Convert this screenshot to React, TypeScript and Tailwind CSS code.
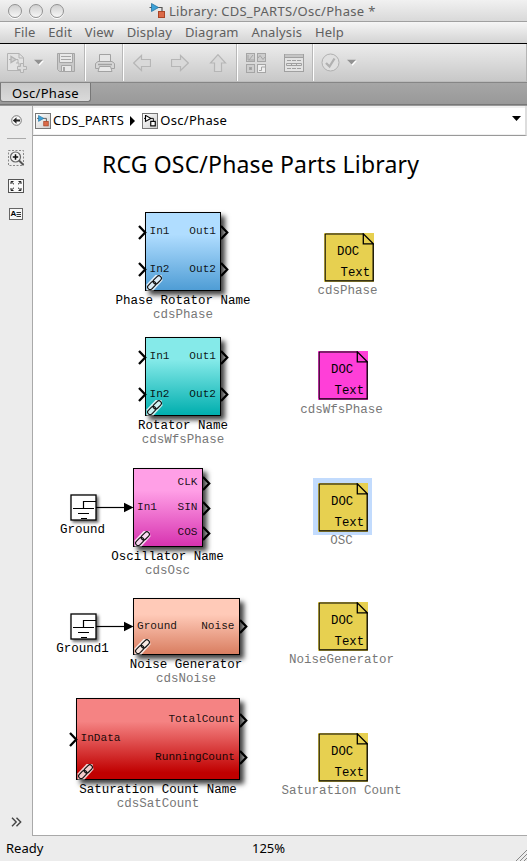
import type { ReactNode } from "react";

const UI = "font-['Noto_Sans','Open_Sans',sans-serif]";

type Port = { label: string; y: number };
type BlockData = {
  name: string;
  kind: string;
  x: number;
  y: number;
  w: number;
  h: number;
  fill: string;
  inputs: Port[];
  outputs: Port[];
  wired?: boolean;
};

// Coordinates are relative to the top left corner of the canvas.
const blocks: BlockData[] = [
  {
    name: "Phase Rotator Name", kind: "cdsPhase", x: 112, y: 76, w: 76, h: 79,
    fill: "bg-[linear-gradient(#b0ddff_0%,#b0ddff_28%,#4f9dd5_100%)]",
    inputs: [{ label: "In1", y: 20 }, { label: "In2", y: 57.5 }],
    outputs: [{ label: "Out1", y: 20 }, { label: "Out2", y: 57.5 }],
  },
  {
    name: "Rotator Name", kind: "cdsWfsPhase", x: 112, y: 201, w: 76, h: 79,
    fill: "bg-[linear-gradient(#85eae9_0%,#85eae9_28%,#00aeae_100%)]",
    inputs: [{ label: "In1", y: 20 }, { label: "In2", y: 57.5 }],
    outputs: [{ label: "Out1", y: 20 }, { label: "Out2", y: 57.5 }],
  },
  {
    name: "Oscillator Name", kind: "cdsOsc", x: 99.5, y: 332, w: 70, h: 79,
    fill: "bg-[linear-gradient(#ff9fe6_0%,#ff9fe6_28%,#d733b0_100%)]",
    inputs: [{ label: "In1", y: 40 }],
    outputs: [{ label: "CLK", y: 15 }, { label: "SIN", y: 40 }, { label: "COS", y: 65 }],
    wired: true,
  },
  {
    name: "Noise Generator", kind: "cdsNoise", x: 99.5, y: 462, w: 107, h: 57,
    fill: "bg-[linear-gradient(#ffcab8_0%,#ffcab8_28%,#d97e61_100%)]",
    inputs: [{ label: "Ground", y: 28.5 }],
    outputs: [{ label: "Noise", y: 28.5 }],
    wired: true,
  },
  {
    name: "Saturation Count Name", kind: "cdsSatCount", x: 43, y: 562, w: 164, h: 82,
    fill: "bg-[linear-gradient(#f58383_0%,#f58383_28%,#c00000_92%,#c00000_100%)]",
    inputs: [{ label: "InData", y: 41 }],
    outputs: [{ label: "TotalCount", y: 22 }, { label: "RunningCount", y: 59.5 }],
  },
];

const docs = [
  { name: "cdsPhase", x: 290.5, y: 96.5, fill: "bg-[#e7d050]" },
  { name: "cdsWfsPhase", x: 284.5, y: 215, fill: "bg-[#ff3fd8]" },
  { name: "OSC", x: 284.5, y: 346.5, fill: "bg-[#e7d050]", selected: true },
  { name: "NoiseGenerator", x: 284.5, y: 465.5, fill: "bg-[#e7d050]" },
  { name: "Saturation Count", x: 284.5, y: 596.5, fill: "bg-[#e7d050]" },
];

const grounds = [
  { name: "Ground", x: 36.5, y: 358 },
  { name: "Ground1", x: 36.5, y: 477 },
];

function Chevron({ x, y }: { x: number; y: number }) {
  return (
    <svg className="absolute h-[15px] w-[9px]" style={{ left: x, top: y - 7.5 }} viewBox="0 0 9 15">
      <path d="M1 1L7.200 7.500L1 14" fill="none" stroke="#000" strokeWidth="2.3" />
    </svg>
  );
}

function LinkBadge() {
  return (
    <svg className="absolute bottom-0 left-px h-[16px] w-[17px]" viewBox="0 0 17 16">
      <path d="M.5 9.500L9.500 0H15.500L16.500 5.500L7.500 15.500H.5Z" fill="#fff" opacity=".8" />
      <g fill="none" stroke="#111" strokeWidth="1.15">
        <rect x="-4.7" y="-2.5" width="9.4" height="5" rx="2.5" transform="translate(11.300 4.900) rotate(-45)" />
        <rect x="-4.7" y="-2.5" width="9.4" height="5" rx="2.5" transform="translate(5.700 10.500) rotate(-45)" />
      </g>
    </svg>
  );
}

function Block({ b }: { b: BlockData }) {
  return (
    <div className="absolute" style={{ left: b.x, top: b.y, width: b.w, height: b.h }}>
      <div className={`absolute inset-0 border border-black shadow-[4px_4px_5px_rgba(0,0,0,0.75)] ${b.fill}`} />
      {b.outputs.map((p) => (
        <Chevron key={p.label} x={b.w - 1} y={p.y} />
      ))}
      {!b.wired && b.inputs.map((p) => <Chevron key={p.label} x={-7.5} y={p.y} />)}
      {b.inputs.map((p) => (
        <span key={p.label} className="absolute left-[4.5px] -translate-y-1/2 text-[11.1px] leading-3 whitespace-pre text-black/90" style={{ top: p.y - 1 }}>
          {p.label}
        </span>
      ))}
      {b.outputs.map((p) => (
        <span key={p.label} className="absolute right-[5px] -translate-y-1/2 text-[11.1px] leading-3 whitespace-pre text-black/90" style={{ top: p.y - 1 }}>
          {p.label}
        </span>
      ))}
      <LinkBadge />
      <div className="absolute top-full left-1/2 flex -translate-x-1/2 flex-col items-center pt-[2.5px] text-[12.5px] leading-[14px] whitespace-pre">
        <span>{b.name}</span>
        <span className="text-[#777]">{b.kind}</span>
      </div>
    </div>
  );
}

function Ground({ g }: { g: (typeof grounds)[number] }) {
  return (
    <div className="absolute h-[26px] w-[26px]" style={{ left: g.x, top: g.y }}>
      <svg className="absolute top-0 left-0 h-[26px] w-[64px] overflow-visible" viewBox="0 0 64 26">
        <rect x="1" y="1" width="25" height="25" fill="#fff" stroke="#000" strokeWidth="1.3" className="drop-shadow-[2px_2px_1.5px_rgba(0,0,0,0.6)]" />
        <path d="M26 7.5H13.5V14M3 14.5H24M8 19.5H19M11 24.5H17" fill="none" stroke="#000" strokeWidth="1.2" />
        <path d="M26 13.5H55" stroke="#000" strokeWidth="1.2" />
        <path d="M54 8.7L63.5 13.5L54 18.3Z" />
      </svg>
      <span className="absolute top-[29px] left-1/2 -translate-x-1/2 text-[12.5px] leading-[14px]">{g.name}</span>
    </div>
  );
}

function Doc({ d }: { d: (typeof docs)[number] }) {
  return (
    <div className="absolute h-[49px] w-[50px]" style={{ left: d.x, top: d.y }}>
      {d.selected && <div className="absolute -top-[5px] -left-[5px] h-[57px] w-[59px] bg-[#c2dbfd]" />}
      <div className={`absolute inset-0 ${d.fill}`} />
      <svg className="absolute inset-0 h-[49px] w-[50px]" viewBox="0 0 50 49">
        <path d="M1.2 47.5V1H39" fill="none" stroke="#000" strokeWidth="1" />
        <path d="M1 47.8H49.2V11M39.3 .8V10.8H49.3Z" fill="none" stroke="#000" strokeWidth="1.3" />
      </svg>
      <span className="absolute top-[13px] left-[13.5px] text-[12.3px] leading-[13px]">DOC</span>
      <span className="absolute top-[34px] left-[17px] text-[12.3px] leading-[13px]">Text</span>
      <span className="absolute top-[52.5px] left-[24px] -translate-x-1/2 text-[12.5px] leading-[13px] whitespace-pre text-[#777]">{d.name}</span>
    </div>
  );
}

function ModelGlyph({ className, mono }: { className: string; mono?: boolean }) {
  return (
    <svg className={className} viewBox="0 0 16 16">
      <path d="M0 4.5H12.5V9" fill="none" stroke={mono ? "#000" : "#555"} strokeWidth="1.2" />
      <path d="M2 .5V8.500L9 4.500Z" fill={mono ? "#fff" : "#3ba1d8"} stroke={mono ? "#000" : "#2472a0"} strokeWidth={mono ? 1.5 : 0.8} />
      <rect x="9" y="8.500" width="6" height="6" fill={mono ? "#fff" : "#dc6a48"} stroke={mono ? "#000" : "#a94526"} strokeWidth={mono ? 1.5 : 1} />
    </svg>
  );
}

function CrumbIcon({ mono }: { mono?: boolean }) {
  return (
    <div className="flex h-4 w-4 shrink-0 items-center justify-center border border-[#777] bg-linear-to-br from-white to-[#cfcfcf]">
      <ModelGlyph className="h-[12px] w-[12px]" mono={mono} />
    </div>
  );
}

function Group({ className, children }: { className: string; children?: ReactNode }) {
  return <div className={`flex h-full shrink-0 items-center ${className}`}>{children}</div>;
}

function Caret({ className }: { className: string }) {
  return (
    <svg className={className} viewBox="0 0 10 7">
      <path d="M1 1.8H10L5.5 6.8Z" fill="#fff" />
      <path d="M0 .8H9L4.5 5.6Z" fill="#929292" />
    </svg>
  );
}

function Toolbar() {
  return (
    <div className="flex h-[37px] shrink-0 border-r border-r-[#b5b5b5] bg-linear-to-b from-[#ececec] to-[#c8c8c8]">
      <Group className="w-[85px] pl-[7px]">
        <svg className="h-[20px] w-[20px]" viewBox="0 0 20 20" fill="none" stroke="#b3b3b3">
          <path d="M.5.5H12L16.500 4.500V17.500H.5Z" fill="#e3e3e3" />
          <path d="M12 .5V5H16.500M2 6.500H11V10" />
          <path d="M4 3.500V9.500L9 6.500Z" fill="#d0d0d0" strokeWidth="1.3" />
          <path d="M9 10H12V14" />
          <path d="M13.500 10.500H16.500V13.500H19.500V16.500H16.500V19.500H13.500V16.500H10.500V13.500H13.500Z" fill="#dcdcdc" />
        </svg>
        <Caret className="ml-[7px] h-[7px] w-[10px]" />
        <svg className="ml-[13px] h-[19px] w-[18px]" viewBox="0 0 18 19" fill="none" stroke="#a5a5a5">
          <path d="M.5.5H17.500V18.500H2.500L.5 16.500Z" fill="#c9c9c9" />
          <path d="M2.500.5H15.500V9.500H2.500Z" fill="#e8e8e8" />
          <path d="M4 3.500H14M4 6.500H14" />
          <path d="M4.500 12.500H14.500V18.500H4.500Z" fill="#e8e8e8" />
          <path d="M7 14V18" strokeWidth="2" />
        </svg>
      </Group>
      <Group className="w-[38px] justify-center border-l border-l-white shadow-[-1px_0_0_#b8b8b8]">
        <svg className="h-[18px] w-[20px]" viewBox="0 0 20 18" fill="none" stroke="#a2a2a2">
          <path d="M4.500 8V.5H15.500V8" fill="#e6e6e6" />
          <path d="M3 7.500H17L19.500 9.500V14.500H.5V9.500Z" fill="#d6d6d6" />
          <path d="M4.500 12.500H15.500L17 17.500H3Z" fill="#e8e8e8" />
          <path d="M3 10.500H17" strokeWidth="1.5" />
        </svg>
      </Group>
      <Group className="w-[114px] gap-5 border-l border-l-white pl-[9px] shadow-[-1px_0_0_#b8b8b8]">
        <svg className="h-[18px] w-[18px]" viewBox="0 0 18 18"><path d="M.7 9L8.500 1.500V5.500H17.500V12.500H8.500V16.500Z" fill="#d9d9d9" stroke="#b6b6b6" strokeWidth="1.2" /></svg>
        <svg className="h-[18px] w-[18px]" viewBox="0 0 18 18"><path d="M17.300 9L9.500 1.500V5.500H.5V12.500H9.500V16.500Z" fill="#d9d9d9" stroke="#b6b6b6" strokeWidth="1.2" /></svg>
        <svg className="h-[18px] w-[18px]" viewBox="0 0 18 18"><path d="M9 .7L1.500 9H5.500V17.500H12.500V9H16.500Z" fill="#d9d9d9" stroke="#b6b6b6" strokeWidth="1.2" /></svg>
      </Group>
      <Group className="w-[76px] gap-[17px] border-l border-l-white pl-[8px] shadow-[-1px_0_0_#b8b8b8]">
        <svg className="h-[20px] w-[21px]" viewBox="0 0 21 20" fill="#cdcdcd" stroke="#a5a5a5">
          <rect x=".5" y=".5" width="8" height="8" />
          <rect x="11.500" y=".5" width="8" height="8" />
          <rect x=".5" y="11.500" width="8" height="8" />
          <rect x="11.500" y="11.500" width="8" height="8" fill="#eee" />
          <path d="M2 2V7H8M3 7L7 2M12 5L14 2.500L17 6.500L19 4M13 17.500H15.500V14H19" fill="none" />
          <rect x="3.500" y="14.500" width="2" height="2" fill="#999" />
        </svg>
        <svg className="h-[18px] w-[20px]" viewBox="0 0 20 18" fill="none" stroke="#a0a0a0">
          <rect x=".5" y=".5" width="19" height="17" fill="#e3e3e3" />
          <path d="M1 2H19" strokeWidth="3" stroke="#c5c5c5" />
          <path d="M0 3.500H20" />
          <path d="M3 6.500H17M3 14.500H17" strokeDasharray="4 1" />
          <path d="M2.500 9.500H17.500V11.500H2.500ZM7.500 9V12M12.500 9V12" />
        </svg>
      </Group>
      <Group className="grow border-l border-l-white pl-[7px] shadow-[-1px_0_0_#b8b8b8]">
        <svg className="h-[19px] w-[19px]" viewBox="0 0 19 19" fill="none">
          <circle cx="9.500" cy="9.500" r="8.500" fill="#e0e0e0" stroke="#b0b0b0" />
          <path d="M5 10L8.500 13.500L13.500 5.500" stroke="#b0b0b0" strokeWidth="2.300" />
        </svg>
        <Caret className="ml-[7px] h-[7px] w-[10px]" />
      </Group>
    </div>
  );
}

function Sidebar() {
  return (
    <div className="flex w-8 shrink-0 flex-col items-center bg-[#ececec] pb-[9px]">
      <svg className="mt-[8.5px] h-[11px] w-[11px]" viewBox="0 0 11 11">
        <circle cx="5.500" cy="5.500" r="4.800" fill="#fafafa" stroke="#777" />
        <path d="M1.800 5.500L5.500 2.300V4.500H9V6.500H5.500V8.700Z" fill="#222" />
      </svg>
      <div className="mt-[12.5px] h-px w-[19px] bg-[#aaa]" />
      <svg className="mt-[11px] h-[16px] w-[17px]" viewBox="0 0 17 16" fill="none">
        <rect x=".5" y=".5" width="15" height="15" stroke="#888" strokeDasharray="2 1.500" />
        <circle cx="7.500" cy="7" r="5" fill="#f4f4f4" stroke="#666" strokeWidth="1.200" />
        <path d="M7.500 4.300V9.700M4.800 7H10.200" stroke="#111" strokeWidth="1.500" />
        <path d="M11 10.500L15.500 15" stroke="#555" strokeWidth="2" />
      </svg>
      <svg className="mt-[13px] h-[14px] w-[16px]" viewBox="0 0 16 14" fill="none">
        <rect x=".5" y=".5" width="15" height="13" fill="#fafafa" stroke="#555" />
        <path d="M3 5V2.500H5.500M10.500 2.500H13V5M13 9V11.500H10.500M5.500 11.500H3V9M3 2.500L6 5.300M13 2.500L10 5.300M13 11.500L10 8.700M3 11.500L6 8.700" stroke="#222" />
      </svg>
      <div className="mt-[15px] flex h-[12px] w-[14px] items-center justify-center border border-[#666] bg-[#f8f8f8]">
        <span className="font-['Liberation_Sans',sans-serif] text-[8px] leading-none font-bold text-black">A</span>
        <svg className="h-[7px] w-[5px]" viewBox="0 0 5 7"><path d="M.5 1.500H5M.5 3.500H5M.5 5.500H5" stroke="#333" /></svg>
      </div>
      <svg className="mt-auto h-[10px] w-[11px]" viewBox="0 0 11 10">
        <path d="M1 .7L5.200 5L1 9.300M5.500 .7L9.700 5L5.500 9.300" fill="none" stroke="#444" strokeWidth="1.400" />
      </svg>
    </div>
  );
}

export default function App() {
  return (
    <div className={`flex h-[861px] w-[527px] flex-col overflow-hidden bg-[#ececec] text-black ${UI}`}>
      <div className="flex h-[22px] shrink-0 items-center border-b border-b-[#a0a0a0] bg-linear-to-b from-[#f1f1f1] to-[#d9d9d9] pl-[8px]">
        <div className="flex gap-[7px]">
          {[0, 1, 2].map((i) => (
            <div key={i} className="h-[14px] w-[14px] rounded-full border border-[#929292] bg-linear-to-b from-[#d0d0d0] to-[#f7f7f7] shadow-[0_1px_0_#fff]" />
          ))}
        </div>
        <ModelGlyph className="ml-[85px] h-[16px] w-[17px]" />
        <span className="ml-[3px] text-[13px] leading-5 tracking-[0.3px] whitespace-pre text-[#606060]">Library: CDS_PARTS/Osc/Phase *</span>
      </div>
      <div className="flex h-[21px] shrink-0 items-start gap-[12.8px] bg-linear-to-b from-[#f6f6f6] to-[#d3d3d3] pl-[14px] text-[13px] leading-5 tracking-[0.15px] text-[#606060]">
        {["File", "Edit", "View", "Display", "Diagram", "Analysis", "Help"].map((m) => (
          <span key={m}>{m}</span>
        ))}
      </div>
      <div className="h-px shrink-0 bg-black" />
      <Toolbar />
      <div className="h-[2px] shrink-0 border-b border-b-[#868686] bg-[#bcbcbc]" />
      <div className="flex h-[21px] shrink-0 items-start bg-linear-to-b from-[#a6a6a6] to-[#999]">
        <div className="flex h-[19px] w-[91px] items-center justify-center rounded-b-[3px] border border-t-0 border-[#777] bg-linear-to-b from-[#c9c9c9] to-[#dadada] pt-[2px] text-[13px] leading-4 tracking-[0.3px]">
          Osc/Phase
        </div>
      </div>
      <div className="h-[2px] shrink-0 border-b border-b-[#999] bg-[#777]" />
      <div className="flex min-h-0 flex-1">
        <Sidebar />
        <div className="flex min-w-0 flex-1 flex-col border-l border-l-[#a9a9a9]">
          <div className="flex h-[30px] shrink-0 items-center border-r-2 border-b border-r-[#ddd] border-b-[#999] bg-[#f0f0f0] py-[1px] pl-px">
            <div className="flex h-[26px] flex-1 items-center bg-white pl-px text-[13px] tracking-[0.3px]">
              <CrumbIcon />
              <span className="ml-[2px]">CDS_PARTS</span>
              <svg className="ml-[6px] h-[10px] w-[5px]" viewBox="0 0 5 10"><path d="M0 0L5 5L0 10Z" /></svg>
              <span className="ml-[7px]"><CrumbIcon mono /></span>
              <span className="ml-[2px]">Osc/Phase</span>
              <svg className="mr-[4px] mb-[4px] ml-auto h-[5px] w-[9px]" viewBox="0 0 9 5"><path d="M0 0H9L4.500 5Z" /></svg>
            </div>
          </div>
          <div className="relative flex-1 overflow-hidden border-b border-b-[#a9a9a9] bg-white font-['Liberation_Mono',monospace]">
            <h1 className={`absolute top-[12px] left-[69px] text-[23px] leading-8 tracking-[0.16px] whitespace-pre ${UI}`}>RCG OSC/Phase Parts Library</h1>
            {blocks.map((b) => <Block key={b.name} b={b} />)}
            {grounds.map((g) => <Ground key={g.name} g={g} />)}
            {docs.map((d) => <Doc key={d.name} d={d} />)}
          </div>
        </div>
      </div>
      <div className="relative flex h-[25px] shrink-0 items-center pl-[6px] text-[13px]">
        <span className="w-[246px]">Ready</span>
        <span>125%</span>
        <svg className="absolute right-0 bottom-0 h-[12px] w-[12px]" viewBox="0 0 12 12">
          <path d="M1 12L12 1M5 12L12 5M9 12L12 9" stroke="#888" />
        </svg>
      </div>
    </div>
  );
}
